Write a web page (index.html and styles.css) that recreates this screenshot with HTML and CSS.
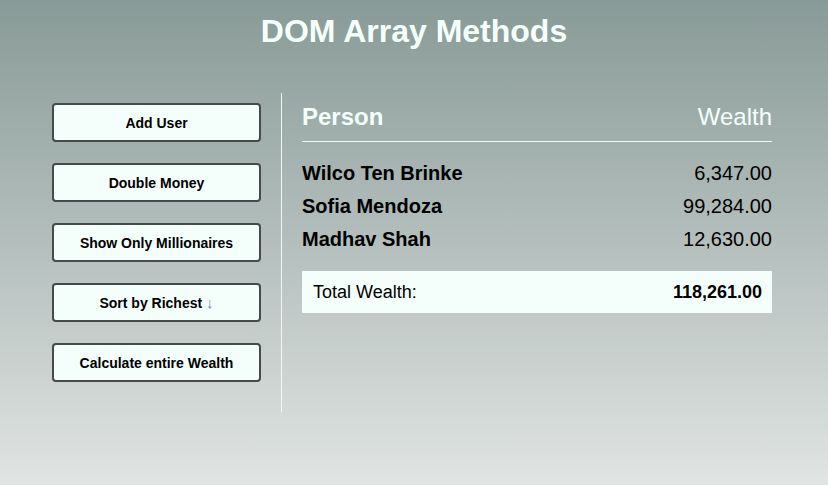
FILE: index.html
```html
<!DOCTYPE html>
<html lang="en">
<head>
<meta charset="UTF-8">
<title>DOM Array Methods</title>
<link rel="stylesheet" href="styles.css">
</head>
<body>
  <h1 class="title">DOM Array Methods</h1>
  <div class="container">
    <aside class="controls">
      <button class="btn">Add User</button>
      <button class="btn">Double Money</button>
      <button class="btn">Show Only Millionaires</button>
      <button class="btn">Sort by Richest <span class="arrow">↓</span></button>
      <button class="btn">Calculate entire Wealth</button>
    </aside>
    <main class="main">
      <h2 class="head"><strong>Person</strong> Wealth</h2>
      <div class="list">
        <div class="person"><strong>Wilco Ten Brinke</strong> 6,347.00</div>
        <div class="person"><strong>Sofia Mendoza</strong> 99,284.00</div>
        <div class="person"><strong>Madhav Shah</strong> 12,630.00</div>
      </div>
      <h3 class="total">Total Wealth: <strong>118,261.00</strong></h3>
    </main>
  </div>
</body>
</html>
```
FILE: styles.css
```css
* { box-sizing: border-box; }
html, body { height: 100%; }
body {
  margin: 0;
  font-family: "Liberation Sans", Arial, sans-serif;
  background: linear-gradient(to bottom, #889a97 0%, #e0e4e2 100%);
  min-height: 485px;
}
.title {
  margin: 0;
  padding-top: 13px;
  font-size: 32px;
  font-weight: bold;
  text-align: center;
  color: #f5fffc;
  line-height: 37px;
}
.container {
  display: flex;
  margin: 43px 0 0 52px;
  width: 720px;
}
.controls {
  width: 230px;
  padding: 10px 20px 30px 0;
  border-right: 1px solid #f3f7f6;
  display: flex;
  flex-direction: column;
  gap: 21px;
}
.btn {
  display: block;
  width: 209px;
  height: 39px;
  background: #f4fffc;
  border: 2px solid #454a4a;
  border-radius: 4px;
  font-family: "Liberation Sans", Arial, sans-serif;
  font-size: 14px;
  font-weight: bold;
  color: #000;
  padding: 0;
  cursor: pointer;
}
.arrow {
  font-weight: normal;
  font-size: 15px;
  color: #6a86a6;
}
.main {
  width: 490px;
  padding-left: 20px;
}
.head {
  display: flex;
  justify-content: space-between;
  margin: 10px 0 0;
  padding-bottom: 10px;
  border-bottom: 1px solid #f3f7f6;
  font-size: 24px;
  font-weight: normal;
  color: #f5fffc;
  line-height: 28px;
}
.list { margin-top: 15px; }
.person {
  display: flex;
  justify-content: space-between;
  padding: 5px 0;
  font-size: 20px;
  line-height: 23px;
  color: #000;
}
.total {
  display: flex;
  justify-content: space-between;
  margin: 15px 0 0;
  padding: 10px 10px 10px 11px;
  background: #f4fffc;
  font-size: 18px;
  font-weight: normal;
  line-height: 22px;
  color: #000;
}
```
